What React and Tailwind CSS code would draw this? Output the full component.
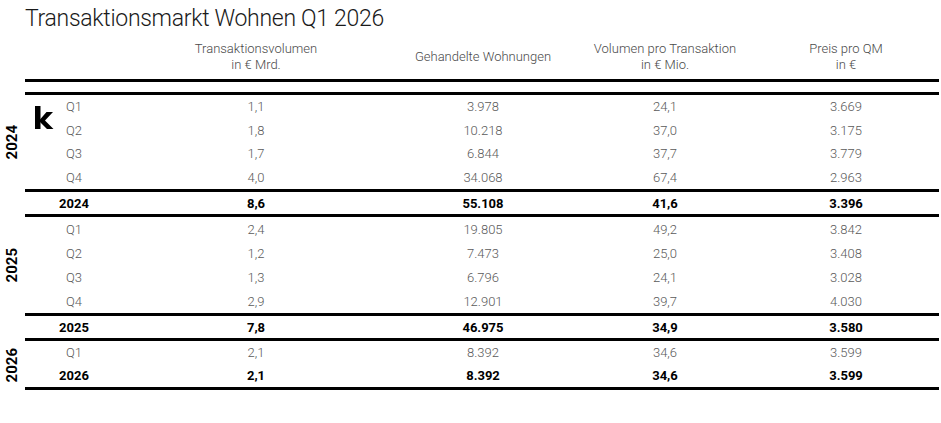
import React from 'react';

const COLS = 'grid grid-cols-[98px_266px_188px_176px_186px]';

const GROUPS = [
  {
    year: '2024',
    rows: [
      ['Q1', '1,1', '3.978', '24,1', '3.669'],
      ['Q2', '1,8', '10.218', '37,0', '3.175'],
      ['Q3', '1,7', '6.844', '37,7', '3.779'],
      ['Q4', '4,0', '34.068', '67,4', '2.963'],
    ],
    total: ['2024', '8,6', '55.108', '41,6', '3.396'],
    logo: true,
  },
  {
    year: '2025',
    rows: [
      ['Q1', '2,4', '19.805', '49,2', '3.842'],
      ['Q2', '1,2', '7.473', '25,0', '3.408'],
      ['Q3', '1,3', '6.796', '24,1', '3.028'],
      ['Q4', '2,9', '12.901', '39,7', '4.030'],
    ],
    total: ['2025', '7,8', '46.975', '34,9', '3.580'],
  },
];

function Row({ cells, bold, className = '' }) {
  return (
    <div
      className={`${COLS} items-center text-[13px] leading-none ${
        bold ? 'font-bold text-black' : 'font-light text-[#5a5a5a]'
      } ${className}`}
    >
      {cells.map((c, i) => (
        <div key={i} className="text-center">
          {c}
        </div>
      ))}
    </div>
  );
}

function YearLabel({ year }) {
  return (
    <div className="w-[25px] shrink-0 flex items-center justify-center">
      <span className="[writing-mode:vertical-rl] rotate-180 text-[15px] font-bold text-black leading-none">
        {year}
      </span>
    </div>
  );
}

// kleines "k" Logo oben links in der 2024er Gruppe
function Logo() {
  return (
    <svg className="absolute left-[10px] top-[11px]" width="19" height="24" viewBox="0 0 19 24">
      <rect x="0" y="0" width="5.5" height="23" fill="#000" />
      <polygon points="5,13.5 11.5,6 18,6 10,14.5 18.5,23 12,23 5,16" fill="#000" />
    </svg>
  );
}

const Line = () => <div className="h-[3px] bg-black" />;

export default function App() {
  return (
    <div className="w-[941px] h-[423px] bg-white font-['Roboto',sans-serif] overflow-hidden">
      <div className="pl-[25px] pt-[3px] text-[23px] leading-[32px] font-light text-[#1a1a1a] tracking-[-0.3px]">
        Transaktionsmarkt Wohnen Q1 2026
      </div>

      <div className="pl-[25px] pr-[2px]">
        <div className={`${COLS} h-[44px] items-center text-[13px] leading-[16px] font-light text-[#4a4a4a]`}>
          <div />
          <div className="text-center">
            Transaktionsvolumen
            <br />
            in € Mrd.
          </div>
          <div className="text-center">Gehandelte Wohnungen</div>
          <div className="text-center">
            Volumen pro Transaktion
            <br />
            in € Mio.
          </div>
          <div className="text-center">
            Preis pro QM
            <br />
            in €
          </div>
        </div>
        <Line />
        <div className="h-[10px]" />
        <Line />
      </div>

      {GROUPS.map((g, gi) => (
        <div key={g.year}>
          <div className="flex pr-[2px]">
            <YearLabel year={g.year} />
            <div className={`relative flex-1 flex flex-col ${gi === 0 ? 'h-[94px]' : 'h-[96px]'}`}>
              {g.logo && <Logo />}
              {g.rows.map((r) => (
                <Row key={r[0]} cells={r} className="flex-1" />
              ))}
            </div>
          </div>
          <div className="pl-[25px] pr-[2px]">
            <Line />
            <Row cells={g.total} bold className="h-[22px]" />
            <Line />
          </div>
        </div>
      ))}

      <div className="flex pr-[2px]">
        <YearLabel year="2026" />
        <div className="flex-1">
          <Row cells={['Q1', '2,1', '8.392', '34,6', '3.599']} className="h-[23px]" />
          <Row cells={['2026', '2,1', '8.392', '34,6', '3.599']} bold className="h-[23px]" />
          <Line />
        </div>
      </div>
    </div>
  );
}
